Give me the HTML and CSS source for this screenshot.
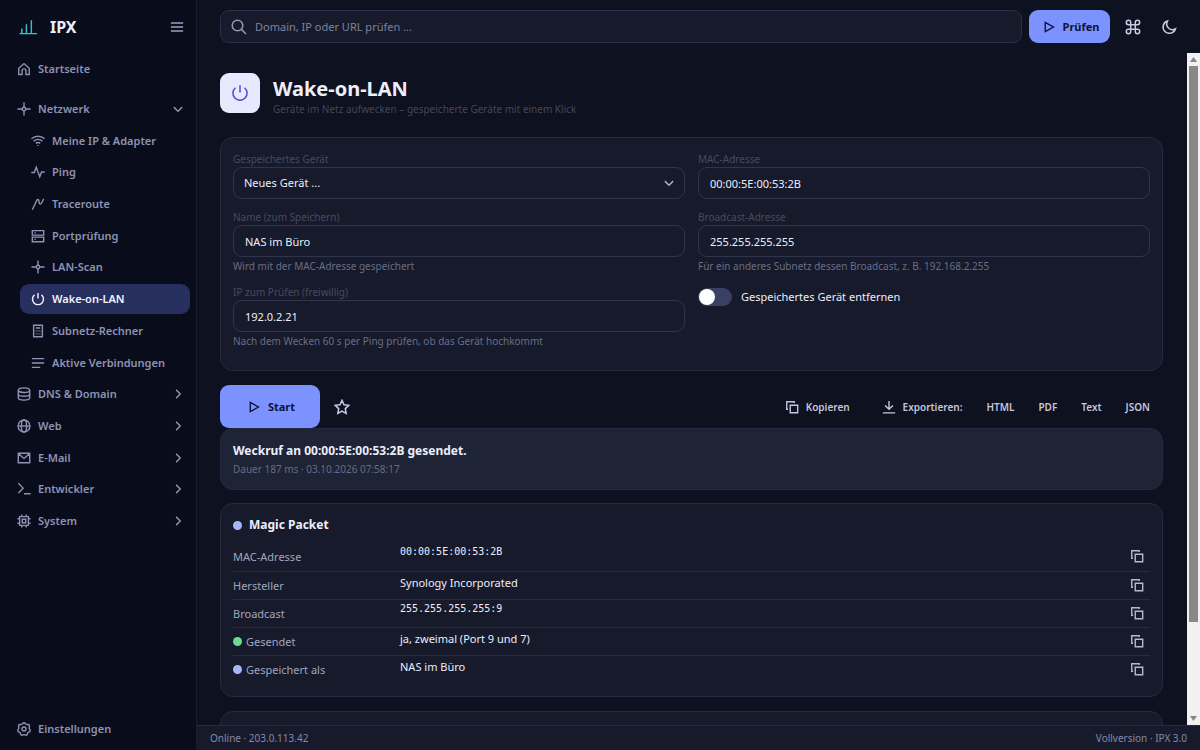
FILE: index.html
```html
<!DOCTYPE html>
<html lang="de">
<head>
<meta charset="utf-8">
<title>IPX – Wake-on-LAN</title>
<link rel="stylesheet" href="styles.css">
</head>
<body>
<svg class="sprite" aria-hidden="true">
  <symbol id="i-home" viewBox="0 0 16 16"><path d="M2 7.2 8 1.8l6 5.4v7h-3.8V10a2.2 2.2 0 0 0-4.4 0v4.200H2z"/></symbol>
  <symbol id="i-node" viewBox="0 0 16 16"><circle cx="8" cy="8" r="2"/><path d="M8 .5v5.500M8 10v5.500M.5 8H6M10 8h5.500"/></symbol>
  <symbol id="i-wifi" viewBox="0 0 16 16"><path d="M.5 5.500a11 11 0 0 1 15 0M3 8.200a7.200 7.200 0 0 1 10 0M5.500 10.700a4 4 0 0 1 5 0"/><path d="M8 12.600v1.200"/></symbol>
  <symbol id="i-pulse" viewBox="0 0 16 16"><path d="M.3 8.500h3.500L6 2.500l4 11 2-5.500h3.700"/></symbol>
  <symbol id="i-route" viewBox="0 0 16 16"><path d="M1.500 14.500 6.500 4c.8-1.700 2.300-1.400 2.500.3l.4 2.400c.3 1.700 1.900 1.700 2.700.1L14.500 2"/></symbol>
  <symbol id="i-server" viewBox="0 0 16 16"><path d="M1.500 1.800h13V7h-13zM1.500 9.300h13v5.200h-13zM4 4.400h1.500M4 11.900h1.500"/></symbol>
  <symbol id="i-power" viewBox="0 0 16 16"><path d="M8 1v6.500M4 3.300a6.300 6.300 0 1 0 8 0"/></symbol>
  <symbol id="i-calc" viewBox="0 0 16 16"><path d="M3 1.500h10v13H3zM5.500 4.500h5M5.300 8h1M7.500 8h1M9.700 8h1M5.300 11.300h1M7.500 11.300h1M9.700 11.300h1"/></symbol>
  <symbol id="i-list" viewBox="0 0 16 16"><path d="M1 3h14M1 8h14M1 13h9.500"/></symbol>
  <symbol id="i-db" viewBox="0 0 16 16"><ellipse cx="8" cy="3.600" rx="6.500" ry="2.600"/><path d="M1.500 3.600v8.800c0 1.400 2.900 2.600 6.500 2.600s6.500-1.200 6.500-2.600V3.600M1.500 8c0 1.400 2.900 2.600 6.500 2.600s6.500-1.200 6.500-2.600"/></symbol>
  <symbol id="i-globe" viewBox="0 0 16 16"><circle cx="8" cy="8" r="6.800"/><ellipse cx="8" cy="8" rx="3" ry="6.800"/><path d="M1.200 8h13.600"/></symbol>
  <symbol id="i-mail" viewBox="0 0 16 16"><path d="M1.500 2.500h13v11h-13zM1.500 3l6.500 5.500L14.500 3"/></symbol>
  <symbol id="i-term" viewBox="0 0 16 16"><path d="m1.500 1.500 5.500 5.500-5.500 5.500M8 13.500h7.500"/></symbol>
  <symbol id="i-chip" viewBox="0 0 16 16"><path d="M3 3h10v10H3zM6 6h4v4H6zM5.500 3V.5M10.500 3V.5M5.500 15.500V13M10.500 15.500V13M3 5.500H.5M3 10.500H.5M15.500 5.500H13M15.500 10.500H13"/></symbol>
  <symbol id="i-gear" viewBox="0 0 16 16"><path d="M8 .9c1.500 0 1.800 1.500 2.900 1.900 1 .4 2.300-.4 3.100.8s-.3 2.200-.2 3.300c.1 1.200 1.600 1.700 1.300 3.100s-1.800 1.300-2.600 2.200c-.7.900-.3 2.300-1.600 2.800s-2-.6-2.900-.6-1.700 1.100-2.900.6-.9-1.900-1.600-2.800C2.700 11.300 1.200 11.400.9 10s1.200-1.900 1.300-3.100c.1-1.100-1-2.100-.2-3.300s2.100-.4 3.100-.8C6.200 2.400 6.500.9 8 .9z"/><circle cx="8" cy="8" r="2.300"/></symbol>
  <symbol id="i-right" viewBox="0 0 16 16"><path d="m5.500 2.500 5.500 5.500-5.500 5.500"/></symbol>
  <symbol id="i-down" viewBox="0 0 16 16"><path d="M2.500 5.500 8 11l5.500-5.500"/></symbol>
  <symbol id="i-play" viewBox="0 0 16 16"><path d="M3 1.800v12.400L14 8z"/></symbol>
  <symbol id="i-search" viewBox="0 0 16 16"><circle cx="6.500" cy="6.500" r="5.300"/><path d="m10.400 10.400 4.600 4.600"/></symbol>
  <symbol id="i-cmd" viewBox="0 0 16 16"><path d="M5.700 5.700h4.600v4.600H5.700zM5.700 5.700H3.500a2.200 2.200 0 1 1 2.200-2.200zM10.300 5.700V3.500a2.200 2.200 0 1 1 2.200 2.200zM10.300 10.300h2.200a2.200 2.200 0 1 1-2.200 2.200zM5.700 10.300v2.200a2.200 2.200 0 1 1-2.200-2.200z"/></symbol>
  <symbol id="i-moon" viewBox="0 0 16 16"><path d="M6.500 2a6.300 6.300 0 1 0 7.900 7.900A5.800 5.800 0 0 1 6.500 2z"/></symbol>
  <symbol id="i-star" viewBox="0 0 16 16"><path d="m8 1.300 2 4.400 4.800.6-3.500 3.300.9 4.800L8 12l-4.200 2.400.9-4.800-3.500-3.300 4.800-.6z"/></symbol>
  <symbol id="i-copy" viewBox="0 0 16 16"><path d="M6 6h8.500v8.500H6zM3.500 10.500H2V2h8.500v1.500"/></symbol>
  <symbol id="i-save" viewBox="0 0 16 16"><path d="M8 1v9.500M3.500 6.200 8 10.700l4.500-4.500M1 14.700h14"/></symbol>
</svg>

<div class="app">
  <aside class="sidebar">
    <header class="brand">
      <svg class="logo" viewBox="0 0 20 16"><path d="M.5 15h18.500M3 15V9.500M7.800 15V5M13 15V1"/></svg>
      <span class="brand-name">IPX</span>
      <button class="menu-button" type="button" aria-label="Menü"><svg class="icon" viewBox="0 0 16 16"><path d="M1 3.500h14M1 8h14M1 12.500h14"/></svg></button>
    </header>
    <nav class="nav">
      <a class="nav-item" href="#"><svg class="icon"><use href="#i-home"/></svg>Startseite</a>
      <ul class="nav-list">
        <li><a class="nav-item" href="#"><svg class="icon"><use href="#i-node"/></svg>Netzwerk<svg class="chevron"><use href="#i-down"/></svg></a></li>
        <li class="sub"><a class="nav-item" href="#"><svg class="icon"><use href="#i-wifi"/></svg>Meine IP &amp; Adapter</a></li>
        <li class="sub"><a class="nav-item" href="#"><svg class="icon"><use href="#i-pulse"/></svg>Ping</a></li>
        <li class="sub"><a class="nav-item" href="#"><svg class="icon"><use href="#i-route"/></svg>Traceroute</a></li>
        <li class="sub"><a class="nav-item" href="#"><svg class="icon"><use href="#i-server"/></svg>Portprüfung</a></li>
        <li class="sub"><a class="nav-item" href="#"><svg class="icon"><use href="#i-node"/></svg>LAN-Scan</a></li>
        <li class="sub"><a class="nav-item active" href="#" aria-current="page"><svg class="icon"><use href="#i-power"/></svg>Wake-on-LAN</a></li>
        <li class="sub"><a class="nav-item" href="#"><svg class="icon"><use href="#i-calc"/></svg>Subnetz-Rechner</a></li>
        <li class="sub"><a class="nav-item" href="#"><svg class="icon"><use href="#i-list"/></svg>Aktive Verbindungen</a></li>
        <li><a class="nav-item" href="#"><svg class="icon"><use href="#i-db"/></svg>DNS &amp; Domain<svg class="chevron"><use href="#i-right"/></svg></a></li>
        <li><a class="nav-item" href="#"><svg class="icon"><use href="#i-globe"/></svg>Web<svg class="chevron"><use href="#i-right"/></svg></a></li>
        <li><a class="nav-item" href="#"><svg class="icon"><use href="#i-mail"/></svg>E-Mail<svg class="chevron"><use href="#i-right"/></svg></a></li>
        <li><a class="nav-item" href="#"><svg class="icon"><use href="#i-term"/></svg>Entwickler<svg class="chevron"><use href="#i-right"/></svg></a></li>
        <li><a class="nav-item" href="#"><svg class="icon"><use href="#i-chip"/></svg>System<svg class="chevron"><use href="#i-right"/></svg></a></li>
      </ul>
    </nav>
    <a class="nav-item" href="#"><svg class="icon"><use href="#i-gear"/></svg>Einstellungen</a>
  </aside>

  <div class="workspace">
    <header class="topbar">
      <label class="search"><svg class="icon icon-m"><use href="#i-search"/></svg><input type="search" aria-label="Suche" placeholder="Domain, IP oder URL prüfen ..."></label>
      <button class="primary check" type="button"><svg class="icon icon-s"><use href="#i-play"/></svg>Prüfen</button>
      <button class="icon-button" type="button" aria-label="Befehle"><svg class="icon icon-m"><use href="#i-cmd"/></svg></button>
      <button class="icon-button" type="button" aria-label="Dunkelmodus"><svg class="icon icon-m"><use href="#i-moon"/></svg></button>
    </header>

    <div class="viewport">
      <main class="content">
        <header class="page-head">
          <span class="tile"><svg class="icon icon-l"><use href="#i-power"/></svg></span>
          <div class="page-title">
            <h1>Wake-on-LAN</h1>
            <p>Geräte im Netz aufwecken – gespeicherte Geräte mit einem Klick</p>
          </div>
        </header>

        <form class="panel form">
          <div class="field">
            <label for="device">Gespeichertes Gerät</label>
            <div class="select-wrap">
              <select id="device"><option>Neues Gerät ...</option></select>
              <svg class="chevron"><use href="#i-down"/></svg>
            </div>
          </div>
          <div class="field">
            <label for="mac">MAC-Adresse</label>
            <input id="mac" type="text" value="00:00:5E:00:53:2B">
          </div>
          <div class="field">
            <label for="name">Name (zum Speichern)</label>
            <input id="name" type="text" value="NAS im Büro">
            <small>Wird mit der MAC-Adresse gespeichert</small>
          </div>
          <div class="field">
            <label for="bcast">Broadcast-Adresse</label>
            <input id="bcast" type="text" value="255.255.255.255">
            <small>Für ein anderes Subnetz dessen Broadcast, z. B. 192.168.2.255</small>
          </div>
          <div class="field">
            <label for="ip">IP zum Prüfen (freiwillig)</label>
            <input id="ip" type="text" value="192.0.2.21">
            <small>Nach dem Wecken 60 s per Ping prüfen, ob das Gerät hochkommt</small>
          </div>
          <label class="switch"><input type="checkbox" role="switch">Gespeichertes Gerät entfernen</label>
        </form>

        <div class="actions">
          <button class="primary start" type="button"><svg class="icon icon-s"><use href="#i-play"/></svg>Start</button>
          <button class="icon-button" type="button" aria-label="Favorit"><svg class="icon icon-m"><use href="#i-star"/></svg></button>
          <div class="exports">
            <button class="text-button copy-all" type="button"><svg class="icon"><use href="#i-copy"/></svg>Kopieren</button>
            <span class="text-button"><svg class="icon"><use href="#i-save"/></svg>Exportieren:</span>
            <button class="text-button" type="button">HTML</button>
            <button class="text-button" type="button">PDF</button>
            <button class="text-button" type="button">Text</button>
            <button class="text-button" type="button">JSON</button>
          </div>
        </div>

        <section class="panel result">
          <h2>Weckruf an 00:00:5E:00:53:2B gesendet.</h2>
          <p>Dauer 187 ms · 03.10.2026 07:58:17</p>
        </section>

        <section class="panel card">
          <h2><span class="dot"></span>Magic Packet</h2>
          <table class="facts">
            <tr><th scope="row">MAC-Adresse</th><td class="mono">00:00:5E:00:53:2B</td><td class="copy"><button type="button" aria-label="Kopieren"><svg class="icon"><use href="#i-copy"/></svg></button></td></tr>
            <tr><th scope="row">Hersteller</th><td>Synology Incorporated</td><td class="copy"><button type="button" aria-label="Kopieren"><svg class="icon"><use href="#i-copy"/></svg></button></td></tr>
            <tr><th scope="row">Broadcast</th><td class="mono">255.255.255.255:9</td><td class="copy"><button type="button" aria-label="Kopieren"><svg class="icon"><use href="#i-copy"/></svg></button></td></tr>
            <tr><th scope="row"><span class="dot ok"></span>Gesendet</th><td>ja, zweimal (Port 9 und 7)</td><td class="copy"><button type="button" aria-label="Kopieren"><svg class="icon"><use href="#i-copy"/></svg></button></td></tr>
            <tr><th scope="row"><span class="dot"></span>Gespeichert als</th><td>NAS im Büro</td><td class="copy"><button type="button" aria-label="Kopieren"><svg class="icon"><use href="#i-copy"/></svg></button></td></tr>
          </table>
        </section>

        <section class="panel next"></section>
      </main>
      <div class="scrollbar" aria-hidden="true">
        <svg viewBox="0 0 13 13"><path d="M3 9h7L6.500 4z"/></svg>
        <div class="track"><div class="thumb"></div></div>
        <svg viewBox="0 0 13 13"><path d="M3 4h7L6.500 9z"/></svg>
      </div>
    </div>

    <footer class="status"><span>Online · 203.0.113.42</span><span>Vollversion · IPX 3.0</span></footer>
  </div>
</div>
</body>
</html>
```
FILE: styles.css
```css
* { box-sizing: border-box; }

body {
  margin: 0;
  background: #0e111f;
  color: #eceefb;
  font: 11px/16px "Noto Sans", sans-serif;
}

h1, h2, p, ul { margin: 0; padding: 0; }
button, input, select { font: inherit; color: inherit; }
button { padding: 0; border: 0; background: none; }

.sprite { display: none; }

.icon, .chevron {
  flex: none;
  display: block;
  width: 14px;
  height: 14px;
  fill: none;
  stroke: currentColor;
  stroke-width: 1.6;
}
.chevron { width: 12px; height: 12px; stroke-width: 1.9; }
.icon-s { width: 12px; height: 12px; stroke-width: 1.8; }
.icon-m { width: 16px; height: 16px; stroke-width: 1.5; }
.icon-l { width: 18px; height: 18px; stroke-width: 1.3; }

.app { display: flex; height: 100vh; overflow: hidden; }

/* Sidebar */
.sidebar {
  flex: none;
  display: flex;
  flex-direction: column;
  width: 197px;
  padding: 12px 6px 6px;
  background: #090c1a;
  border-right: 1px solid #1a1e30;
}
.brand { display: flex; align-items: center; gap: 12px; height: 30px; padding: 0 6px 0 13px; margin-bottom: 12px; }
.logo { width: 19px; height: 16px; fill: none; stroke: #35c4cf; stroke-width: 1.5; }
.brand-name { font-size: 16px; font-weight: 700; }
.menu-button { margin-left: auto; color: #9a9fbe; }
.nav { flex: 1; }
.nav-list {
  display: grid;
  grid-auto-rows: 1fr;
  min-height: 444px;
  margin-top: 9px;
  list-style: none;
}
.nav-list li { display: grid; align-content: center; }
.sub { padding-left: 14px; }
.nav-item {
  display: flex;
  align-items: center;
  gap: 7px;
  height: 30px;
  padding: 0 6px 0 11px;
  border-radius: 9px;
  color: #8e93b3;
  font-weight: 600;
  text-decoration: none;
}
.nav-item .chevron { margin-left: auto; }
.nav-item.active { background: #272f5f; color: #f2f3ff; }

/* Top bar */
.workspace { flex: 1; display: flex; flex-direction: column; min-width: 0; }
.topbar { display: flex; align-items: center; height: 53px; padding: 0 13px 0 23px; }
.search {
  flex: 1;
  display: flex;
  align-items: center;
  gap: 8px;
  height: 33px;
  padding: 0 10px;
  border: 1px solid #2b304a;
  border-radius: 9px;
  background: #161a2b;
  color: #9498b0;
}
.search input { flex: 1; padding: 0; border: 0; outline: 0; background: none; }
.search input::placeholder { color: #7f839b; opacity: 1; }
.primary {
  display: flex;
  align-items: center;
  justify-content: center;
  gap: 8px;
  padding-left: 3px;
  border-radius: 9px;
  background: #7c92ff;
  color: #0d1233;
  font-weight: 700;
}
.check { width: 81px; height: 33px; margin: 0 5px 0 7px; }
.icon-button { display: grid; place-items: center; width: 36px; height: 32px; color: #c9cce2; }

/* Page */
.viewport { flex: 1; display: flex; min-height: 0; }
.content { flex: 1; min-width: 0; padding: 20px 24px 0 23px; overflow: hidden; }
.page-head { display: flex; align-items: flex-start; gap: 13px; margin-bottom: 20px; }
.page-title { padding-top: 3px; }
.page-head h1 { font-size: 20px; line-height: 25px; }
.page-head p { color: #41465c; font-size: 10px; line-height: 16px; }
.tile {
  display: grid;
  place-items: center;
  width: 40px;
  height: 40px;
  border-radius: 9px;
  background: #e7eaff;
  color: #4548d0;
}

.panel { border: 1px solid #252a40; border-radius: 13px; background: #161a2b; padding: 13px 12px; }

.form {
  display: grid;
  grid-template-columns: 1fr 1fr;
  gap: 11px 13px;
  padding-top: 14px;
  padding-bottom: 21px;
  margin-bottom: 14px;
}
.field label { display: block; color: #454a62; font-size: 10px; line-height: 15px; }
.field small { display: block; color: #686d88; font-size: 10px; line-height: 16px; padding-top: 1px; }
.field input, .field select {
  display: block;
  width: 100%;
  height: 32px;
  padding: 0 11px;
  border: 1px solid #30354f;
  border-radius: 9px;
  outline: 0;
  background: #161a2b;
}
.field select { appearance: none; padding: 0 10px; }
.select-wrap { display: grid; align-items: center; }
.select-wrap > * { grid-area: 1 / 1; }
.select-wrap .chevron { justify-self: end; margin-right: 10px; color: #a9adc6; pointer-events: none; }

.switch { display: flex; align-items: center; align-self: start; gap: 9px; padding-top: 3px; }
.switch input {
  appearance: none;
  display: flex;
  align-items: center;
  width: 34px;
  height: 18px;
  margin: 0;
  padding: 0 1px;
  border-radius: 9px;
  background: #3a4063;
}
.switch input::before { content: ""; width: 16px; height: 16px; border-radius: 50%; background: #fff; }
.switch input:checked { justify-content: flex-end; background: #7c92ff; }

.actions { display: flex; align-items: center; gap: 4px; }
.start { width: 100px; height: 43px; }
.exports { display: flex; margin-left: auto; padding-right: 1px; }
.text-button { display: flex; align-items: center; gap: 7px; padding: 0 12px; color: #c3c6dd; font-size: 10px; font-weight: 600; }
.copy-all { margin-right: 8px; }

.result { background: #1f2336; margin-bottom: 13px; padding: 13px 12px 11px; }
.panel h2 { font-size: 12px; line-height: 18px; }
.result p { color: #666b83; font-size: 10px; line-height: 18px; }

.card { padding: 12px 12px 13px; margin-bottom: 14px; }
.card h2 { display: flex; align-items: center; gap: 7px; margin-bottom: 9px; }
.dot { display: inline-block; width: 9px; height: 9px; margin-right: 4px; border-radius: 50%; background: #a9b5fb; }
.card h2 .dot { margin: 0; }
.dot.ok { background: #68dd8f; }

.facts { width: 100%; border-collapse: collapse; }
.facts th, .facts td { height: 28px; padding: 0; text-align: left; vertical-align: top; font-weight: 400; }
.facts tr + tr { border-top: 1px solid #262b40; }
.facts th { width: 167px; padding-top: 6px; color: #a2a6be; }
.facts td { padding-top: 3px; }
.facts .mono { padding-top: 1px; font-family: "DejaVu Sans Mono", monospace; font-size: 10px; }
.facts .copy { width: 20px; padding-top: 6px; color: #b5b8d0; }
.next { height: 120px; }

.scrollbar { flex: none; display: flex; flex-direction: column; width: 13px; background: #f1f1f1; }
.scrollbar svg { display: block; width: 13px; height: 13px; fill: #858585; }
.track { flex: 1; padding: 0 2px; }
.thumb { height: 86%; background: #888; }

.status {
  flex: none;
  display: flex;
  align-items: center;
  justify-content: space-between;
  height: 25px;
  padding: 0 13px;
  border-top: 1px solid #262b40;
  background: #161a2b;
  color: #858aa5;
  font-size: 10px;
}
```
